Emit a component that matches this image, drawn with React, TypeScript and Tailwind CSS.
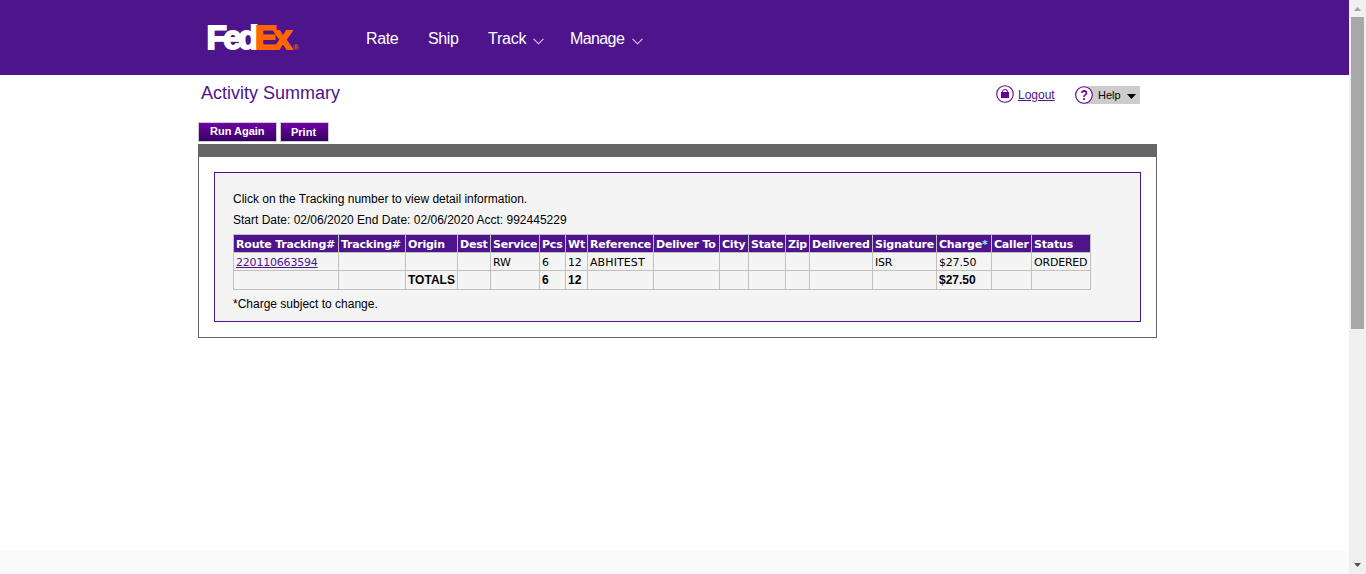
import React from "react";

type Column = { label: string; width: string; value?: string; total?: string; tracking?: string };

const columns: Column[] = [
  { label: "Route Tracking#", width: "w-[105px]", value: "220110663594" },
  { label: "Tracking#", width: "w-[67px]" },
  { label: "Origin", width: "w-[52px]", total: "TOTALS" },
  { label: "Dest", width: "w-[33px]" },
  { label: "Service", width: "w-[49px]", value: "RW" },
  { label: "Pcs", width: "w-[26px]", value: "6", total: "6" },
  { label: "Wt", width: "w-[22px]", value: "12", total: "12" },
  { label: "Reference", width: "w-[66px]", value: "ABHITEST", tracking: "tracking-[0.1px]" },
  { label: "Deliver To", width: "w-[66px]" },
  { label: "City", width: "w-[29px]" },
  { label: "State", width: "w-[37px]" },
  { label: "Zip", width: "w-[24px]" },
  { label: "Delivered", width: "w-[63px]" },
  { label: "Signature", width: "w-[64px]", value: "ISR" },
  { label: "Charge", width: "w-[55px]", value: "$27.50", total: "$27.50" },
  { label: "Caller", width: "w-[40px]" },
  { label: "Status", width: "w-[59px]", value: "ORDERED" },
];

const cell = "border-r border-b border-[#c0c0c0] pb-0 pr-0 pl-[2px] text-left whitespace-nowrap";

function Chevron() {
  return (
    <svg width="11" height="7" viewBox="0 0 11 7" className="mt-[9px]" fill="none" stroke="#d9cbe8" strokeWidth="1.1">
      <path d="M0.5 0.8 L5.5 5.8 L10.5 0.8" />
    </svg>
  );
}

function Logo() {
  return (
    <svg width="100" height="42" viewBox="0 0 100 42" fontFamily="'Liberation Sans', Arial, sans-serif">
      <text x="3.5" y="33" fontSize="33.5" fontWeight="700" letterSpacing="-3.7" strokeWidth="1.8">
        <tspan fill="#fff" stroke="#fff">Fed</tspan>
        <tspan fill="#ff6600" stroke="#ff6600">Ex</tspan>
      </text>
      <text x="90" y="34" fontSize="8" fontWeight="700" fill="#e8601a">®</text>
    </svg>
  );
}

function Header() {
  return (
    <header className="flex h-[75px] bg-[#4d148c] pl-[203px] text-[16px] leading-[20px] tracking-[-0.4px] text-white">
      <div className="w-[163px] pt-[16px] tracking-normal"><Logo /></div>
      <nav className="flex pt-[29px]">
        <a className="w-[62px]">Rate</a>
        <a className="w-[60px]">Ship</a>
        <a className="flex w-[82px] tracking-[-0.2px]"><span className="w-[45px]">Track</span><Chevron /></a>
        <a className="flex tracking-[-0.6px]"><span className="w-[62px]">Manage</span><Chevron /></a>
      </nav>
    </header>
  );
}

function Toolbar() {
  return (
    <div className="flex h-[47px]">
      <h1 className="w-[798px] pt-[7px] pl-[3px] text-[18px] leading-[22px] text-[#4d148c]">Activity Summary</h1>
      <div className="flex w-[79px] pt-[10px]">
        <svg width="18" height="18" viewBox="0 0 18 18" fill="none">
          <circle cx="9" cy="9" r="8.3" stroke="#660099" strokeWidth="1.1" />
          <rect x="5" y="7" width="8" height="6" fill="#660099" />
          <path d="M6.5 7.5V6.2Q6.5 4.6 9 4.6T11.5 6.2V7.5" stroke="#660099" strokeWidth="1" />
        </svg>
        <a className="ml-[4px] pt-[2px] text-[12px] leading-[16px] text-[#4d148c] underline">Logout</a>
      </div>
      <div className="mt-[11px] flex h-[18px] w-[65px] rounded-l-full bg-[#ccc]">
        <svg width="18" height="18" viewBox="0 0 18 18">
          <circle cx="9" cy="9" r="8.3" fill="#fff" stroke="#660099" strokeWidth="1.1" />
          <text x="5.4" y="13.6" textLength="7.4" lengthAdjust="spacingAndGlyphs" fontFamily="'Liberation Sans', sans-serif" fontSize="14" fontWeight="700" fill="#660099">?</text>
        </svg>
        <span className="w-[34px] pl-[5px] text-[11px] leading-[18px] text-black">Help</span>
        <svg width="9" height="5" viewBox="0 0 9 5" className="mt-[8px]"><path d="M0 0H9L4.5 5Z" /></svg>
      </div>
    </div>
  );
}

function ResultTable() {
  return (
    <table className="mt-[3px] w-[858px] table-fixed border-separate border-spacing-0 border-t border-l border-[#c0c0c0] font-['DejaVu_Sans',Verdana,sans-serif] text-[11px] leading-[15px]">
      <colgroup>{columns.map((c) => <col key={c.label} className={c.width} />)}</colgroup>
      <thead>
        <tr className="h-[18px] bg-[#4d148c] tracking-[-0.2px] text-white">
          {columns.map((c) => (
            <th key={c.label} className={`${cell} pt-[2px]`}>
              {c.label}
              {c.label === "Charge" && <span className="text-[#99e6ff]">*</span>}
            </th>
          ))}
        </tr>
      </thead>
      <tbody>
        <tr className="h-[18px] tracking-[-0.2px]">
          {columns.map((c, i) => (
            <td key={c.label} className={`${cell} pt-[2px] ${c.tracking ?? ""}`}>
              {i === 0 ? <a className="text-[#4d148c] underline">{c.value}</a> : c.value}
            </td>
          ))}
        </tr>
        <tr className="h-[19px] font-['Liberation_Sans',Arial,sans-serif] text-[12px] leading-[18px] font-bold">
          {columns.map((c) => <td key={c.label} className={`${cell} pt-0`}>{c.total}</td>)}
        </tr>
      </tbody>
    </table>
  );
}

const button = "flex h-[20px] border border-[#ccc] bg-linear-to-b from-[#7300a8] to-[#360063] text-[11px] font-bold leading-[17px] text-white";

export default function App() {
  return (
    <div className="flex h-[574px] w-[1366px] overflow-hidden bg-white font-['Liberation_Sans',Arial,sans-serif] text-black">
      <div className="flex w-[1349px] flex-col">
        <Header />
        <main className="ml-[198px] h-[475px] w-[959px]">
          <Toolbar />
          <div className="flex h-[22px] gap-[3px]">
            <button className={`${button} w-[79px] pl-[11px]`}>Run Again</button>
            <button className={`${button} w-[49px] pt-px pl-[10px]`}>Print</button>
          </div>
          <section className="h-[194px] border border-t-[13px] border-[#666] px-[15px] pt-[15px]">
            <div className="h-[150px] border border-[#4d148c] bg-[#f4f4f4] pt-[16px] pl-[18px] text-[12px] leading-[21px]">
              <p>Click on the Tracking number to view detail information.</p>
              <p>Start Date: 02/06/2020 End Date: 02/06/2020 Acct: 992445229</p>
              <ResultTable />
              <p className="mt-[4px]">*Charge subject to change.</p>
            </div>
          </section>
        </main>
        <footer className="h-[24px] bg-[#fafafa]" />
      </div>
      <div className="flex w-[17px] flex-col items-center bg-[#f0f0f0]">
        <svg width="7" height="4" viewBox="0 0 7 4" className="mt-[7px] mb-[6px]"><path d="M0 4H7L3.5 0Z" fill="#a3a3a3" /></svg>
        <div className="h-[312px] w-[13px] bg-[#a8a8a8]" />
        <svg width="7" height="4" viewBox="0 0 7 4" className="mt-auto mb-[7px]"><path d="M0 0H7L3.5 4Z" fill="#505050" /></svg>
      </div>
    </div>
  );
}
